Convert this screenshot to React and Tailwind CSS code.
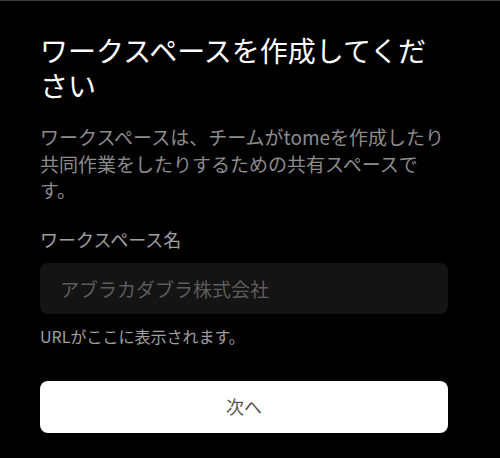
export default function App() {
  const font = { fontFamily: '"Noto Sans CJK JP", "Noto Sans", sans-serif' };

  return (
    <div className="min-h-[458px] w-[500px] bg-black border-t border-[#3a3a3a]" style={font}>
      <div className="w-[408px] ml-10 pt-[32px]">
        <h1 className="text-[28px] leading-[35px] text-white font-normal">
          ワークスペースを作成してください
        </h1>
        <p className="mt-[21px] text-[19px] leading-[26.5px] text-[#8c8c8c]">
          ワークスペースは、チームがtomeを作成したり共同作業をしたりするための共有スペースです。
        </p>

        <label className="block mt-[22px] text-[18px] leading-[26px] text-[#a0a0a0]">
          ワークスペース名
        </label>
        <input
          type="text"
          placeholder="アブラカダブラ株式会社"
          className="mt-[11px] w-full h-[51px] px-5 rounded-lg bg-[#141414] text-[19px] text-white placeholder:text-[#5c5c5c] outline-none"
          style={font}
        />
        <p className="mt-[10px] text-[16px] leading-[24px] text-[#a0a0a0]">
          URLがここに表示されます。
        </p>

        <button
          className="mt-[33px] w-full h-[52px] rounded-lg bg-white text-[18px] text-[#555555]"
          style={font}
        >
          次へ
        </button>
      </div>
    </div>
  );
}
